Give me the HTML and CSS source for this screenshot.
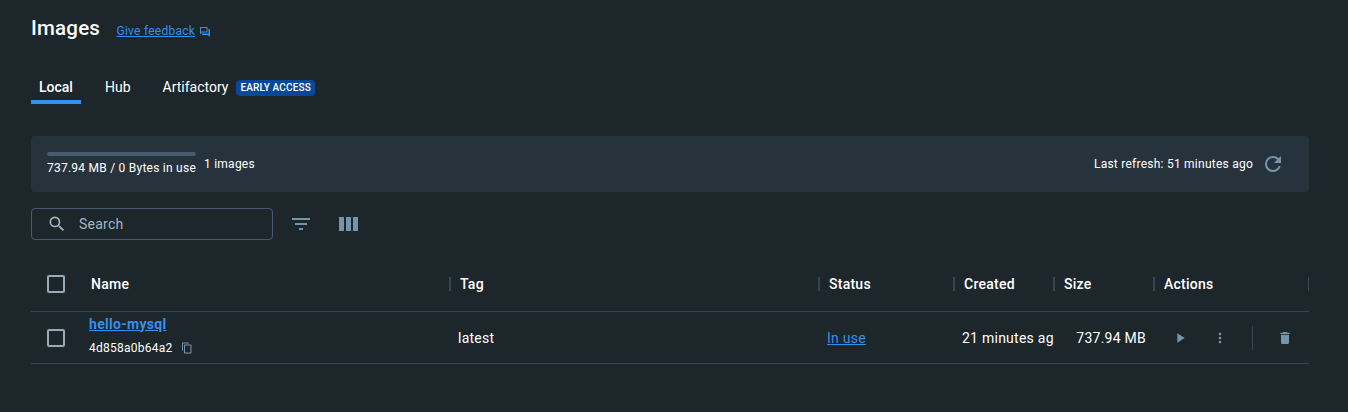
FILE: index.html
```html
<!DOCTYPE html>
<html lang="en">
<head>
<meta charset="utf-8">
<title>Images</title>
<link rel="stylesheet" href="styles.css">
</head>
<body>
<main class="page">
  <header class="heading">
    <h1 class="title">Images</h1>
    <a class="feedback" href="#"><span class="feedback-text">Give feedback</span>
      <svg class="icon feedback-icon" viewBox="0 0 24 24"><path d="M15 4v7H5.170L4 12.170V4h11m1-2H3c-.55 0-1 .45-1 1v14l4-4h10c.55 0 1-.45 1-1V3c0-.55-.45-1-1-1zm5 4h-2v9H6v2c0 .55.45 1 1 1h11l4 4V7c0-.55-.45-1-1-1z"/></svg>
    </a>
  </header>
  <nav class="tabs">
    <a class="tab tab-active">Local</a>
    <a class="tab">Hub</a>
    <a class="tab">Artifactory<span class="badge">EARLY ACCESS</span></a>
  </nav>
  <section class="summary">
    <div class="usage"><div class="usage-bar"></div><span class="usage-text">737.94 MB / 0 Bytes in use</span></div>
    <span class="count">1 images</span>
    <span class="refresh">Last refresh: 51 minutes ago</span>
    <svg class="icon refresh-icon" viewBox="0 0 24 24"><path d="M17.650 6.350A7.958 7.958 0 0 0 12 4a8 8 0 1 0 7.730 10h-2.080A6 6 0 1 1 12 6c1.660 0 3.140.69 4.220 1.780L13 11h7V4z"/></svg>
  </section>
  <div class="toolbar">
    <div class="search">
      <svg class="icon search-icon" viewBox="0 0 24 24"><path d="M15.500 14h-.79l-.28-.27A6.471 6.471 0 0 0 16 9.500 6.500 6.500 0 1 0 9.500 16c1.610 0 3.090-.59 4.230-1.570l.27.28v.79l5 4.990L20.490 19zm-6 0a4.500 4.500 0 1 1 0-9 4.500 4.500 0 0 1 0 9z"/></svg>
      <span class="placeholder">Search</span>
    </div>
    <svg class="icon filter-icon" viewBox="0 0 24 24"><path d="M10 18h4v-2h-4zM3 6v2h18V6zm3 7h12v-2H6z"/></svg>
    <svg class="icon columns-icon" viewBox="0 0 24 24"><path d="M3 5h5v14H3zM10 5h5v14h-5zM17 5h5v14h-5z"/></svg>
  </div>
  <section class="table">
    <div class="row head">
      <span class="cell-check"><span class="checkbox"></span></span>
      <span class="th">Name</span>
      <span class="th divided">Tag</span>
      <span class="th divided">Status</span>
      <span class="th divided">Created</span>
      <span class="th divided">Size</span>
      <span class="th divided last">Actions</span>
    </div>
    <div class="row body-row">
      <span class="cell-check"><span class="checkbox"></span></span>
      <div class="name-cell">
        <a class="image-name" href="#">hello-mysql</a>
        <div class="image-id"><span>4d858a0b64a2</span>
          <svg class="icon copy-icon" viewBox="0 0 24 24"><path d="M16 1H4c-1.100 0-2 .9-2 2v14h2V3h12zm3 4H8c-1.100 0-2 .9-2 2v14c0 1.100.9 2 2 2h11c1.100 0 2-.9 2-2V7c0-1.100-.9-2-2-2zm0 16H8V7h11z"/></svg>
        </div>
      </div>
      <span class="td">latest</span>
      <span class="td"><a class="status" href="#">In use</a></span>
      <span class="td created">21 minutes ag</span>
      <span class="td size">737.94 MB</span>
      <div class="actions">
        <svg class="icon action-icon" viewBox="0 0 24 24"><path d="M8 5v14l11-7z"/></svg>
        <svg class="icon action-icon more" viewBox="0 0 24 24"><path d="M12 8c1.100 0 2-.9 2-2s-.9-2-2-2-2 .9-2 2 .9 2 2 2zm0 2c-1.100 0-2 .9-2 2s.9 2 2 2 2-.9 2-2-.9-2-2-2zm0 6c-1.100 0-2 .9-2 2s.9 2 2 2 2-.9 2-2-.9-2-2-2z"/></svg>
        <span class="rule"></span>
        <svg class="icon action-icon" viewBox="0 0 24 24"><path d="M6 19c0 1.100.9 2 2 2h8c1.100 0 2-.9 2-2V7H6zM19 4h-3.500l-1-1h-5l-1 1H5v2h14z"/></svg>
      </div>
    </div>
  </section>
</main>
</body>
</html>
```
FILE: styles.css
```css
* { box-sizing: border-box; }
body {
  margin: 0;
  min-height: 412px;
  background: #1c262b;
  color: #fff;
  font: 400 14px/20px Roboto, sans-serif;
}
.page { width: 1309px; padding: 16px 0 0 31px; }
.icon { display: block; flex: none; fill: #7794ab; }
.heading { display: flex; height: 24px; align-items: center; }
.title { margin: 0; width: 69.5px; font-size: 20.5px; line-height: 24px; font-weight: 500; letter-spacing: 0.2px; }
.feedback {
  display: flex; align-items: center; margin: 5px 0 0 16px;
  color: #3391ee; font-size: 12px; text-decoration: none; letter-spacing: 0.25px;
}
.feedback-text { text-decoration: underline; }
.feedback-icon { width: 12px; height: 12px; margin: 2px 0 0 4px; fill: #3391ee; }
.tabs { display: flex; gap: 16px; height: 32px; margin-top: 32px; }
.tab { display: flex; height: 32px; padding: 5px 8px 0; line-height: 20px; }
.tab-active { font-weight: 500; border-bottom: 4px solid #3391ee; }
.badge {
  height: 16px; margin: 3px 0 0 8px; padding: 0 4px; border-radius: 4px;
  background: #08479a; font-size: 10px; font-weight: 500; line-height: 15px; letter-spacing: 0.14px;
}
.summary {
  display: flex; align-items: center; height: 56px; margin-top: 32px;
  padding: 0 24px 0 16px; border-radius: 4px; background: #27333c;
  font-size: 12px; letter-spacing: 0.24px;
}
.usage { margin-top: 1px; }
.usage-bar { height: 4px; border-radius: 2px; background: #465c6e; }
.usage-text { display: block; line-height: 20px; margin-top: 2px; }
.count { margin-left: 8px; }
.refresh { margin-left: auto; }
.refresh-icon { width: 24px; height: 24px; margin-left: 8px; }
.toolbar { display: flex; align-items: center; height: 32px; margin-top: 16px; }
.search {
  display: flex; align-items: center; width: 242px; height: 32px; padding-left: 15px;
  border: 1px solid #465c6e; border-radius: 4px;
}
.search-icon { width: 20px; height: 20px; fill: #a5b6c4; }
.placeholder { margin-left: 12px; color: #a5b6c4; letter-spacing: 0.25px; }
.filter-icon { width: 24px; height: 24px; margin-left: 16px; }
.columns-icon { width: 24px; height: 24px; margin-left: 23px; }
.table { margin-top: 16px; }
.row {
  display: grid; grid-template-columns: 50px 369px 369px 135px 100px 100px 155px;
  align-items: center; border-bottom: 1px solid #344654;
}
.head { height: 56px; }
.body-row { height: 52px; }
.cell-check { padding-left: 16px; }
.checkbox { display: block; width: 18px; height: 18px; border: 2px solid #94abbc; border-radius: 2px; }
.th { padding-left: 10px; font-weight: 500; letter-spacing: 0.25px; }
.divided {
  margin-left: -1px; padding-left: 11px;
  background: linear-gradient(#344654, #344654) 0 3px / 2px 14px no-repeat;
}
.last { background: linear-gradient(#344654, #344654) 0 3px / 2px 14px no-repeat, linear-gradient(#344654, #344654) 100% 3px / 1px 14px no-repeat; }
.td { padding-left: 8px; letter-spacing: 0.25px; white-space: nowrap; }
.size { padding: 0 8px 0 0; text-align: right; }
.name-cell { padding-left: 8px; margin-top: -4px; }
.image-name { display: block; color: #3391ee; font-weight: 700; line-height: 24px; letter-spacing: 0.3px; }
.image-id { display: flex; align-items: center; height: 24px; font-size: 12px; letter-spacing: 0.25px; }
.copy-icon { width: 12px; height: 12px; margin-left: 8px; }
.status { color: #3391ee; }
.actions { display: flex; align-items: center; padding-left: 18px; }
.action-icon { width: 16px; height: 16px; }
.more { margin-left: 24px; }
.rule { width: 1px; height: 24px; margin: 0 24px; background: #344654; }
```
